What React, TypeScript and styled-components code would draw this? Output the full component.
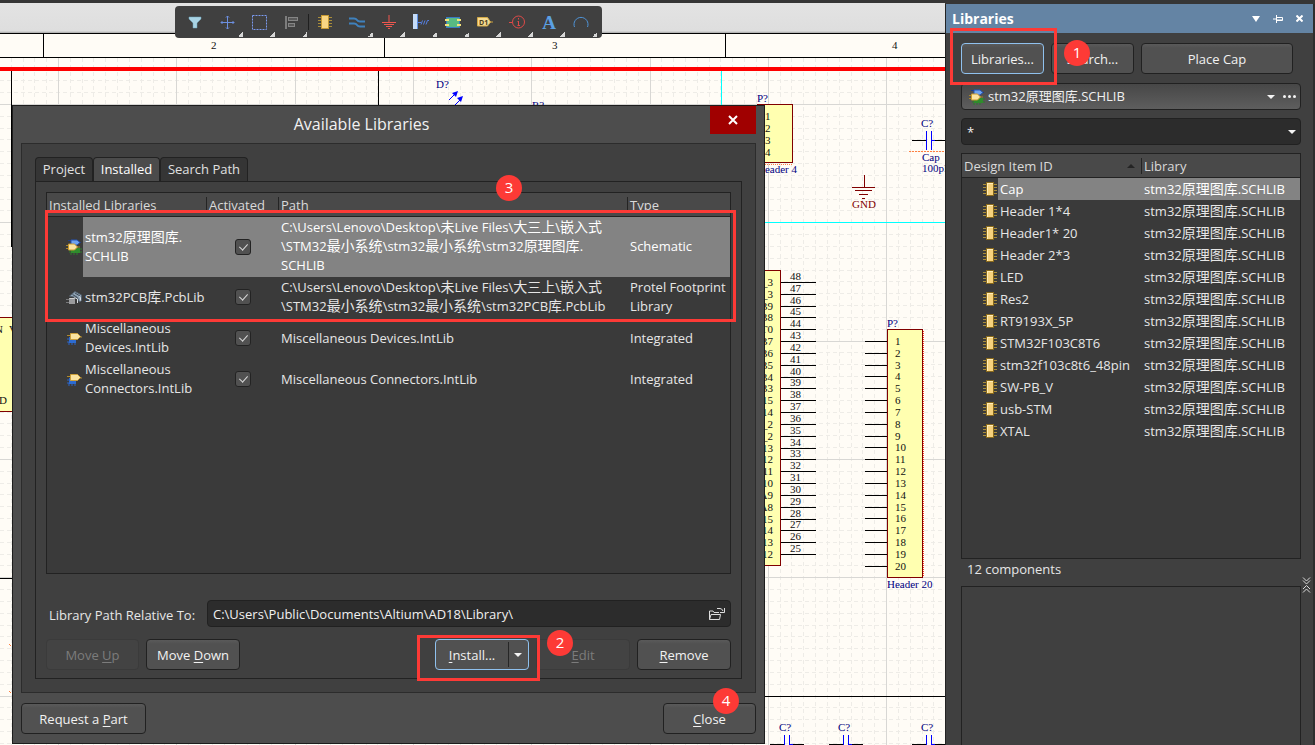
import React from "react";
import styled, { createGlobalStyle, css } from "styled-components";

const GlobalStyle = createGlobalStyle`
  * { box-sizing: border-box; }
  html, body { margin: 0; padding: 0; }
  body {
    background: #363636;
    color: #e6e6e6;
    font-family: "Open Sans", "Noto Sans", "Noto Sans CJK SC", sans-serif;
    font-size: 13px;
    line-height: 19px;
  }
  button, input, select { font: inherit; color: inherit; }
`;

const serif = `"Liberation Serif", serif`;

/* ---------- shared parts ---------- */

const Screen = styled.div`
  display: flex;
  flex-direction: column;
  height: 100vh;
  overflow: hidden;
  padding-top: 3px;
`;

const Workspace = styled.main`
  display: flex;
  flex: 1;
  min-height: 0;
`;

const Han = styled.span`
  font-size: 14px;
  line-height: 1;
`;

const HAN_RUN = /([\u4e00-\u9fff]+)/;

function Mixed({ text }: { text: string }) {
  return (
    <>
      {text.split(HAN_RUN).map((part, i) =>
        HAN_RUN.test(part) ? <Han key={i}>{part}</Han> : part
      )}
    </>
  );
}

function Lines({ lines }: { lines: string[] }) {
  return (
    <>
      {lines.map((line, i) => (
        <React.Fragment key={i}>
          {i > 0 && <br />}
          <Mixed text={line} />
        </React.Fragment>
      ))}
    </>
  );
}

const Button = styled.button<{ $width?: number; $focused?: boolean }>`
  height: 31px;
  width: ${(p) => (p.$width ? `${p.$width}px` : "auto")};
  padding: 2px 0 0;
  border: 1px solid ${(p) => (p.$focused ? "#8fc1ee" : "#212121")};
  border-radius: 4px;
  background: linear-gradient(#5a5a5a, #515151 4px, #515151);
  color: #f2f2f2;
  white-space: nowrap;
  &:disabled {
    border-color: #3b3b3b;
    background: #434343;
    color: #7c7c7c;
  }
  u { text-underline-offset: 2px; }
`;

const Anchor = styled.div`
  position: relative;
  display: flex;
`;

const Highlight = styled.span<{ $x: number; $y: number; $w: number; $h: number }>`
  position: absolute;
  left: ${(p) => p.$x}px;
  top: ${(p) => p.$y}px;
  width: ${(p) => p.$w}px;
  height: ${(p) => p.$h}px;
  border: 3px solid #fd3a36;
  pointer-events: none;
  z-index: 3;
`;

const Badge = styled.span<{ $x: number; $y: number }>`
  position: absolute;
  left: ${(p) => p.$x}px;
  top: ${(p) => p.$y}px;
  width: 26px;
  height: 26px;
  border-radius: 50%;
  background: #fd3a36;
  color: #fff;
  font-size: 15px;
  line-height: 24px;
  text-align: center;
  pointer-events: none;
  z-index: 4;
`;

const Table = styled.table`
  width: 100%;
  border-collapse: separate;
  border-spacing: 0;
  table-layout: fixed;
  text-align: left;
`;

const HeadCell = styled.th<{ $divided?: boolean }>`
  position: relative;
  height: 24px;
  padding: 2px 2px 0;
  border-bottom: 1px solid #222;
  background: ${(p) =>
    p.$divided
      ? "linear-gradient(#242424, #242424) right center / 1px 16px no-repeat, #494949"
      : "#494949"};
  color: #dadada;
  font-weight: 400;
  white-space: nowrap;
`;

const Row = styled.tr<{ $selected?: boolean }>`
  ${(p) =>
    p.$selected &&
    css`
      color: #fff;
      td:not(:first-child) { background: #838383; }
    `}
`;

/* ---------- icons ---------- */

const ChipIcon = () => (
  <svg width="14" height="14" viewBox="0 0 14 14">
    <path d="M0 2.5h14M0 5.5h14M0 8.5h14M0 11.5h14" stroke="#a98d3a" />
    <rect x="3.5" y="0.5" width="7" height="13" fill="#f7d27c" stroke="#8a6a1c" />
    <path d="M4.5 1v12M4 1.5h6" stroke="#ffedba" />
  </svg>
);

const SchLibIcon = () => (
  <svg width="16" height="16" viewBox="0 0 16 16">
    <path d="M2 1.5h4M12 3.5h3" stroke="#1f3d87" />
    <path d="M5 1h6l3 2.500-3 2.500H5z" fill="#6fa2ee" stroke="#2453b4" />
    <path d="M5 14v2M8 14v2M11 14v2M14 10h2M14 13h2M3 11h2M3 13h2" stroke="#2d7d2a" />
    <rect x="5" y="9" width="9" height="5" fill="#2f8c2d" />
    <path d="M0 6.500h3M0 9.500h3M11 8h3" stroke="#a8842a" />
    <path d="M2.500 5h6l3 3-3 3h-6z" fill="#fbe3a0" stroke="#c99a2e" />
  </svg>
);

const IntLibIcon = () => (
  <svg width="16" height="16" viewBox="0 0 16 16">
    <path d="M3 11v3M6 11v3M9 11v3M1 8h2M1 11h2" stroke="#2a62c4" />
    <rect x="3" y="6" width="7" height="6" fill="#2d6bd0" />
    <path d="M1 4.500h3M12 6h4" stroke="#b0892c" />
    <path d="M4.500 2.500h7l3 3-3 3h-7z" fill="#fbe3a0" stroke="#cda03a" />
  </svg>
);

const PcbLibIcon = () => (
  <svg width="16" height="16" viewBox="0 0 16 16">
    <path d="M0 9.500h4M0 12.500h3" stroke="#77787a" />
    <path d="M3.500 6L9 1.500 15.500 5v5.500l-2 1.500-2-4-4-1z" fill="#8fa3b5" stroke="#53606d" />
    <path d="M6.500 4.500l5 3M9 3l5 3" stroke="#3c4854" />
    <path d="M8.500 7.500l3 1.500v4M13 6.500l1.500 1v3" fill="none" stroke="#d5dbe0" />
    <rect x="3" y="8" width="6" height="6" fill="#9a9b9d" />
    <path d="M3.500 8.500h5" stroke="#d2d2d2" />
  </svg>
);

const CaretDown = () => (
  <svg width="8" height="4" viewBox="0 0 8 4">
    <path d="M0 0h8L4 4z" fill="#f4f4f4" />
  </svg>
);

const OpenFolderIcon = () => (
  <svg width="18" height="14" viewBox="0 0 18 14" fill="none" stroke="#dedede">
    <path d="M1.500 12.500v-8.500h3.500l1 1.500h5M11.500 12.500H1.500l1.500-5h9.500l-1 5z" />
    <path d="M9 1.500h3q2 0 3 2.500M16.500 1v4.500h-4.500" />
  </svg>
);

/* ---------- schematic sheet ---------- */

const Editor = styled.section`
  position: relative;
  flex: 1;
  min-width: 0;
  display: flex;
  flex-direction: column;
  overflow: hidden;
`;

const RulerStrip = styled.div`
  height: 30px;
  flex: none;
  background: linear-gradient(#e3e3e3, #dedede 28px, #a6a6a6);
`;

const Sheet = styled.svg`
  display: block;
  flex: 1;
  width: 100%;
  min-height: 0;
  background: #fffcf6;
  font-family: ${serif};
  font-size: 11px;
  fill: #101010;
  shape-rendering: crispEdges;
`;

const GRID = 11.83;
const at = (origin: number, step: number) => Math.round(origin + step * GRID) + 0.5;

const RIGHT_PINS = [
  "VDD_3", "VSS_3", "PB9", "PB8", "BOOT0", "PB7", "PB6", "PB5", "PB4", "PB3",
  "PA15", "PA14", "VDD_2", "VSS_2", "PA13", "PA12", "PA11", "PA10", "PA9",
  "PA8", "PB15", "PB14", "PB13", "PB12",
];

const range = (n: number, from = 0) => Array.from({ length: n }, (_, i) => i + from);

function GridLines() {
  return (
    <g>
      <g stroke="#eeece7" strokeDasharray="4 3">
        {range(200, -4).map((i) => (
          <path key={`v${i}`} d={`M${at(58, i)} 58V1600`} />
        ))}
        {range(130, -2).map((i) => (
          <path key={`h${i}`} d={`M0 ${at(104, i)}H2400`} />
        ))}
      </g>
      <g stroke="#d8d7d4">
        {range(20).map((i) => (
          <path key={`v${i}`} d={`M${at(58, i * 10)} 58V1600`} />
        ))}
        {range(13).map((i) => (
          <path key={`h${i}`} d={`M0 ${at(104, i * 10)}H2400`} />
        ))}
      </g>
    </g>
  );
}

function Capacitor({ x, y }: { x: number; y: number }) {
  return (
    <g>
      <text x={x - 5} y={y - 13} fill="#000080">C?</text>
      <path d={`M${x - 14} ${y}.5h14M${x + 9} ${y}.5h11`} stroke="#000" />
      <path d={`M${x}.5 ${y - 9}v19M${x + 5}.5 ${y - 9}v19M${x + 5} ${y}.5h4`} stroke="#0000ff" />
    </g>
  );
}

function Schematic() {
  return (
    <Sheet>
      <g transform="translate(0 -33)">
        <GridLines />
        <path
          d="M0 33.500H2400M0 57.500H2400M43.500 33V57M384.500 33V57M725.500 33V57"
          stroke="#000"
        />
        <text x="211" y="49">2</text>
        <text x="552" y="49">3</text>
        <text x="892" y="49">4</text>
        <path d="M11.500 69V247M378.500 69V110M0 578.500H12M760 696.500H2400" stroke="#000" />
        <rect x="0" y="67" width="2400" height="4" fill="#ff0000" />
        <path d="M721.500 71V110M760 222.500H2400" stroke="#00ffff" />

        <rect x="-60" y="317.500" width="100" height="94" fill="#ffffb0" stroke="#800000" />
        <text x="-5" y="333">N</text>
        <text x="9" y="333">V</text>
        <text x="-1" y="404">D</text>
        <path d="M9 644l2 2M9 691l2 2" stroke="#ff8040" />

        <text x="436" y="88" fill="#000080">D?</text>
        <g shapeRendering="auto">
          <path d="M449 100l6-6M455 105l6-6" stroke="#0000ff" />
          <path d="M458 91l-6 2 4 4zM463 96l-6 2 4 4z" fill="#0000ff" />
        </g>
        <text x="532" y="109" fill="#000080">R?</text>

        <text x="757" y="102" fill="#000080">P?</text>
        <rect x="757.500" y="104.500" width="35" height="58" fill="#ffffb0" stroke="#800000" />
        {range(4).map((i) => (
          <text key={i} x="765" y={120 + i * 12}>{i + 1}</text>
        ))}
        <path d="M757 164.500H793" stroke="#ff8040" strokeDasharray="1 1" />
        <text x="757" y="173" fill="#000080">Header 4</text>

        <Capacitor x={926} y={140} />
        <path d="M909 151.500H960" stroke="#ff8040" strokeDasharray="2 1" />
        <text x="922" y="161" fill="#000080">Cap</text>
        <text x="922" y="172" fill="#000080">100pF</text>

        <path
          d="M864.500 175V187M852 187.500H875M855 190.500H872M859 194.500H868M862 198.500H865"
          stroke="#800000"
        />
        <text x="852" y="208" fill="#800000">GND</text>

        <rect x="700" y="270.500" width="80.500" height="295" fill="#ffffb0" stroke="#800000" />
        {RIGHT_PINS.map((name, i) => {
          const y = at(282, i);
          return (
            <g key={i}>
              <path d={`M781 ${y}H816`} stroke="#000" />
              <text x="790" y={y - 2.5}>{48 - i}</text>
              <text x="773" y={y + 3.5} textAnchor="end">{name}</text>
            </g>
          );
        })}

        <text x="887" y="327" fill="#000080">P?</text>
        <rect x="887.500" y="329.500" width="35" height="248" fill="#ffffb0" stroke="#800000" />
        <path d="M923.500 331V577" stroke="#ff4020" strokeDasharray="1 1" />
        {range(20).map((i) => {
          const y = at(341, i);
          return (
            <g key={i}>
              <path d={`M865 ${y}H887`} stroke="#000" />
              <text x="895" y={y + 3.5}>{i + 1}</text>
            </g>
          );
        })}
        <text x="887" y="588" fill="#000080">Header 20</text>

        <Capacitor x={784} y={744} />
        <Capacitor x={843} y={744} />
        <Capacitor x={926} y={744} />
      </g>
    </Sheet>
  );
}

/* ---------- floating tool palette ---------- */

const Palette = styled.div`
  position: absolute;
  left: 175px;
  top: 3px;
  display: flex;
  padding: 0 5px 0 4px;
  height: 32px;
  border-radius: 4px;
  background: #404040;
`;

const Tool = styled.button<{ $menu?: boolean }>`
  display: flex;
  align-items: center;
  justify-content: center;
  width: 32px;
  padding: 0;
  border: 0;
  background: ${(p) =>
    p.$menu
      ? "linear-gradient(135deg, transparent 50%, #d6d6d6 50%) right bottom 1px / 5px 5px no-repeat"
      : "none"};
  svg { overflow: visible; }
`;

const ToolDivider = styled.span`
  width: 2px;
  height: 16px;
  margin: 8px 0;
  border-right: 1px solid #1f1f1f;
`;

const TOOLS: { name: string; menu?: boolean; divider?: boolean; art: React.ReactNode }[] = [
  {
    name: "Filter",
    art: <path d="M2 3h12v2l-4 4v5H6V9L2 5z" fill="#a9d3e4" stroke="#6ea5bd" strokeWidth=".5" />,
  },
  {
    name: "Move",
    menu: true,
    art: (
      <path
        d="M8.500 2v13M2 8.500h13M7 3.500L8.500 2 10 3.500M7 13.500L8.500 15l1.500-1.500M3.500 7L2 8.500 3.500 10M13.500 7L15 8.500 13.500 10"
        fill="none"
        stroke="#6c8fe0"
      />
    ),
  },
  {
    name: "Select",
    menu: true,
    art: <rect x="1.500" y="1.500" width="14" height="14" fill="none" stroke="#7b9af0" strokeDasharray="2 1" />,
  },
  {
    name: "Align",
    menu: true,
    divider: true,
    art: (
      <>
        <path d="M3 2v13" stroke="#7d7d7d" strokeWidth="2" />
        <rect x="5.500" y="3.500" width="9" height="3" fill="#5a5a5a" stroke="#858585" />
        <rect x="5.500" y="9.500" width="6" height="3" fill="#5a5a5a" stroke="#858585" />
      </>
    ),
  },
  {
    name: "Place part",
    art: (
      <>
        <path d="M1 3.500h14M1 6.500h14M1 9.500h14M1 12.500h14" stroke="#a98d3a" />
        <rect x="4.500" y="1.500" width="7" height="13" fill="#f9d583" stroke="#c79a34" />
      </>
    ),
  },
  {
    name: "Place wire",
    menu: true,
    art: (
      <path
        d="M0 4.500h5q2 0 3 1.500t3 1.500h5M0 9.500h5q2 0 3 1.500t3 1.500h5"
        fill="none"
        stroke="#3f81bd"
        strokeWidth="2"
      />
    ),
  },
  {
    name: "Place ground",
    menu: true,
    art: <path d="M8 1v7M1 8.500h14M3 10.500h10M5 12.500h6M7 14.500h2" stroke="#f0574f" />,
  },
  {
    name: "Place harness",
    menu: true,
    art: (
      <>
        <rect x="0" y="0" width="4" height="15" fill="#c5dcf8" />
        <path d="M4.500 0v15" stroke="#5d8fe0" />
        <path d="M5 8.500h3M8 10.500l1.500-4M10.500 10.500l1.500-4M13 10.500l1.500-4M14.500 6.500h1.500" stroke="#5580e6" />
      </>
    ),
  },
  {
    name: "Place sheet",
    menu: true,
    art: (
      <>
        <rect x="1.500" y="3.500" width="13" height="10" fill="#58b982" stroke="#3b78c4" />
        <path d="M0 5h4v2H0zM0 10h4v2H0zM12 5h4v2h-4zM12 10h4v2h-4z" fill="#f3e27a" />
      </>
    ),
  },
  {
    name: "Place port",
    menu: true,
    art: (
      <>
        <path d="M13 8h3" stroke="#c9a040" />
        <path d="M0.500 3.500h10l3 4.500-3 4h-10z" fill="#f7dc94" stroke="#d3aa48" />
        <text x="2" y="11" fontSize="7" fontWeight="700" fill="#4b3d18">D1</text>
      </>
    ),
  },
  {
    name: "Place directive",
    menu: true,
    art: (
      <>
        <circle cx="9.500" cy="8" r="6" fill="none" stroke="#df4a48" />
        <path d="M0 8.500h3M9.500 7v4.500M9.500 4v1.500M8.500 7.500h1M8.500 11.500h2.500" stroke="#df4a48" />
      </>
    ),
  },
  {
    name: "Place text",
    menu: true,
    art: (
      <text x="8" y="15" textAnchor="middle" fontSize="19" fontWeight="700" fontFamily="Liberation Serif, serif" fill="#5ba0e4">
        A
      </text>
    ),
  },
  {
    name: "Place arc",
    menu: true,
    art: <path d="M1.500 13a7 7 0 1 1 13 0" fill="none" stroke="#4f94d8" />,
  },
];

function ToolPalette() {
  return (
    <Palette>
      {TOOLS.map((t) => (
        <React.Fragment key={t.name}>
          <Tool type="button" aria-label={t.name} $menu={t.menu}>
            <svg width="16" height="16" viewBox="0 0 16 16">{t.art}</svg>
          </Tool>
          {t.divider && <ToolDivider />}
        </React.Fragment>
      ))}
    </Palette>
  );
}

/* ---------- Available Libraries dialog ---------- */

const Dialog = styled.div`
  position: absolute;
  left: 12px;
  top: 102px;
  bottom: 1px;
  width: 753px;
  display: flex;
  flex-direction: column;
  border: 1px solid #1d1d1d;
  background: #4d4d4d;
`;

const TitleBar = styled.header`
  display: flex;
  align-items: flex-start;
  height: 37px;
  flex: none;
  padding-right: 8px;
  h1 {
    flex: 1;
    margin: 0;
    color: #f2f2f2;
    font-size: 16px;
    font-weight: 400;
    line-height: 37px;
    text-align: center;
  }
`;

const CloseBox = styled.button`
  display: flex;
  align-items: center;
  justify-content: center;
  width: 46px;
  height: 28px;
  padding: 0;
  border: 0;
  background: #a00000;
`;

const Well = styled.div`
  flex: 1;
  min-height: 0;
  display: flex;
  flex-direction: column;
  margin: 0 8px;
  padding: 13px;
  border: 1px solid #2c2c2c;
  background: #404040;
`;

const Tabs = styled.div`
  display: flex;
  height: 24px;
  flex: none;
`;

const Tab = styled.button<{ $width: number }>`
  width: ${(p) => p.$width}px;
  padding: 0;
  border: 1px solid #222;
  border-bottom: 0;
  border-radius: 4px 4px 0 0;
  background: #353535;
  color: #e0e0e0;
  white-space: nowrap;
  &[aria-selected="true"] {
    background: #4b4b4b;
    color: #fff;
  }
`;

const TabPage = styled.div`
  flex: 1;
  min-height: 0;
  display: flex;
  flex-direction: column;
  padding: 10px 10px 8px;
  border: 1px solid #222;
`;

const TableFrame = styled.div`
  position: relative;
  flex: 1;
  min-height: 0;
  border: 1px solid #222;
  background: #3a3a3a;
`;

const LibCell = styled.td<{ $center?: boolean }>`
  padding: 1px 2px 2px;
  vertical-align: middle;
  text-align: ${(p) => (p.$center ? "center" : "left")};
  white-space: nowrap;
  line-height: 19px;
`;

const IconCell = styled.td`
  padding: 0 1px 0 0;
  text-align: right;
  vertical-align: middle;
  svg { display: block; margin-left: auto; }
`;

const CheckBox = styled.input`
  appearance: none;
  display: block;
  width: 16px;
  height: 16px;
  margin: 0 auto;
  border: 1px solid #232323;
  border-radius: 3px;
  background: #515151;
  position: relative;
  &:checked::after {
    content: "";
    position: absolute;
    left: 5px;
    top: 2px;
    width: 4px;
    height: 7px;
    border: solid #d8d8d8;
    border-width: 0 1px 1px 0;
    transform: rotate(42deg);
  }
`;

const PathRow = styled.div`
  display: flex;
  align-items: center;
  margin-top: 26px;
  label {
    width: 161px;
    padding: 3px 0 0 3px;
    white-space: nowrap;
  }
`;

const Field = styled.div<{ $light?: boolean }>`
  flex: 1;
  display: flex;
  align-items: center;
  gap: 3px;
  height: 27px;
  padding: 0 4px 0 5px;
  border: 1px solid #212121;
  border-radius: 4px;
  background: ${(p) => (p.$light ? "linear-gradient(#474747, #5e5e5e)" : "#2c2c2c")};
  color: #f0f0f0;
  input, select {
    flex: 1;
    min-width: 0;
    height: 25px;
    padding: 0;
    border: 0;
    outline: 0;
    appearance: none;
    background: transparent;
  }
`;

const FieldLead = styled.span`
  display: flex;
  padding-left: 2px;
`;

const FieldTail = styled.span`
  display: flex;
  align-items: center;
  gap: 8px;
`;

const GlyphButton = styled.button`
  display: flex;
  align-items: center;
  justify-content: center;
  padding: 0;
  border: 0;
  background: none;
`;

const ButtonRow = styled.div`
  display: flex;
  gap: 7px;
  margin-top: 12px;
`;

const Spacer = styled.span`
  flex: 1;
`;

const SplitButton = styled.div`
  display: flex;
  align-items: center;
  width: 94px;
  height: 31px;
  border: 1px solid #8fc1ee;
  border-radius: 4px;
  background: #515151;
  button {
    height: 29px;
    padding: 2px 0 0;
    border: 0;
    background: none;
    color: #f2f2f2;
  }
  u { text-underline-offset: 2px; }
  button:first-child { width: 72px; }
  button:last-child {
    flex: 1;
    height: 25px;
    padding: 0 1px 0 0;
    border-left: 1px solid #262626;
    display: flex;
    align-items: center;
    justify-content: center;
  }
`;

const Footer = styled.footer`
  display: flex;
  justify-content: space-between;
  padding: 10px 8px 9px;
`;

const LIBRARIES = [
  {
    icon: <SchLibIcon />,
    name: ["stm32原理图库.", "SCHLIB"],
    path: [
      "C:\\Users\\Lenovo\\Desktop\\未Live Files\\大三上\\嵌入式",
      "\\STM32最小系统\\stm32最小系统\\stm32原理图库.",
      "SCHLIB",
    ],
    type: ["Schematic"],
    selected: true,
  },
  {
    icon: <PcbLibIcon />,
    name: ["stm32PCB库.PcbLib"],
    path: [
      "C:\\Users\\Lenovo\\Desktop\\未Live Files\\大三上\\嵌入式",
      "\\STM32最小系统\\stm32最小系统\\stm32PCB库.PcbLib",
    ],
    type: ["Protel Footprint", "Library"],
  },
  {
    icon: <IntLibIcon />,
    name: ["Miscellaneous", "Devices.IntLib"],
    path: ["Miscellaneous Devices.IntLib"],
    type: ["Integrated"],
  },
  {
    icon: <IntLibIcon />,
    name: ["Miscellaneous", "Connectors.IntLib"],
    path: ["Miscellaneous Connectors.IntLib"],
    type: ["Integrated"],
  },
];

function LibrariesDialog() {
  return (
    <Dialog role="dialog" aria-labelledby="dialog-title">
      <TitleBar>
        <h1 id="dialog-title">Available Libraries</h1>
        <CloseBox type="button" aria-label="Close dialog">
          <svg width="10" height="10" viewBox="0 0 10 10">
            <path d="M1 1l8 8M9 1L1 9" stroke="#fff" strokeWidth="2" />
          </svg>
        </CloseBox>
      </TitleBar>
      <Well>
        <Tabs role="tablist">
          <Tab type="button" role="tab" aria-selected="false" $width={58}>Project</Tab>
          <Tab type="button" role="tab" aria-selected="true" $width={67}>Installed</Tab>
          <Tab type="button" role="tab" aria-selected="false" $width={88}>Search Path</Tab>
        </Tabs>
        <TabPage role="tabpanel">
          <TableFrame>
            <Table>
              <colgroup>
                <col style={{ width: 36 }} />
                <col style={{ width: 124 }} />
                <col style={{ width: 72 }} />
                <col style={{ width: 349 }} />
                <col />
              </colgroup>
              <thead>
                <tr>
                  <HeadCell colSpan={2} $divided>Installed Libraries</HeadCell>
                  <HeadCell $divided>Activated</HeadCell>
                  <HeadCell $divided>Path</HeadCell>
                  <HeadCell>Type</HeadCell>
                </tr>
              </thead>
              <tbody>
                {LIBRARIES.map((lib) => (
                  <Row key={lib.name.join("")} $selected={lib.selected}>
                    <IconCell>{lib.icon}</IconCell>
                    <LibCell><Lines lines={lib.name} /></LibCell>
                    <LibCell $center>
                      <CheckBox type="checkbox" defaultChecked aria-label={`Activate ${lib.name.join(" ")}`} />
                    </LibCell>
                    <LibCell><Lines lines={lib.path} /></LibCell>
                    <LibCell><Lines lines={lib.type} /></LibCell>
                  </Row>
                ))}
              </tbody>
            </Table>
            <Highlight $x={-2} $y={17} $w={691} $h={112} />
            <Badge $x={449} $y={-18}>3</Badge>
          </TableFrame>
          <PathRow>
            <label htmlFor="library-path">Library Path Relative To:</label>
            <Field>
              <input id="library-path" defaultValue={"C:\\Users\\Public\\Documents\\Altium\\AD18\\Library\\"} />
              <GlyphButton type="button" aria-label="Browse"><OpenFolderIcon /></GlyphButton>
            </Field>
          </PathRow>
          <ButtonRow>
            <Button type="button" disabled $width={93}>Move <u>U</u>p</Button>
            <Button type="button" $width={94}>Move <u>D</u>own</Button>
            <Spacer />
            <Anchor>
              <SplitButton>
                <button type="button"><u>I</u>nstall...</button>
                <button type="button" aria-label="More install options"><CaretDown /></button>
              </SplitButton>
              <Highlight $x={-18} $y={-4} $w={123} $h={46} />
              <Badge $x={112} $y={-9}>2</Badge>
            </Anchor>
            <Button type="button" disabled $width={94}><u>E</u>dit</Button>
            <Button type="button" $width={94}><u>R</u>emove</Button>
          </ButtonRow>
        </TabPage>
      </Well>
      <Footer>
        <Button type="button" $width={125}>Request a <u>P</u>art</Button>
        <Anchor>
          <Button type="button" $width={93}><u>C</u>lose</Button>
          <Badge $x={50} $y={-15}>4</Badge>
        </Anchor>
      </Footer>
    </Dialog>
  );
}

/* ---------- Libraries side panel ---------- */

const Panel = styled.aside`
  display: flex;
  flex-direction: column;
  width: 370px;
  flex: none;
  margin-top: 1px;
  border-left: 1px solid #232323;
  border-right: 2px solid #2e2e2e;
  background: #404040;
`;

const PanelTitle = styled.header`
  display: flex;
  align-items: center;
  gap: 13px;
  height: 29px;
  flex: none;
  padding: 0 10px 0 6px;
  background: #6484a4;
  color: #fff;
  h2 {
    flex: 1;
    margin: 0;
    font-size: 14px;
    font-weight: 700;
  }
`;

const PanelBody = styled.div`
  flex: 1;
  min-height: 0;
  display: flex;
  flex-direction: column;
  padding: 10px 12px 0 15px;
`;

const PanelButtons = styled.div`
  display: flex;
  gap: 7px;
  margin-bottom: 9px;
  padding-right: 8px;
  > button:last-child { flex: 1; }
`;

const Filter = styled.div`
  display: flex;
  margin: 8px 0;
`;

const Combo = styled.div`
  display: flex;
`;

const ComponentsFrame = styled(TableFrame)`
  flex: none;
  height: 406px;
`;

const PartCell = styled.td`
  height: 22px;
  padding: 0 2px;
  white-space: nowrap;
`;

const SortMark = styled.svg`
  position: absolute;
  right: 7px;
  top: 10px;
`;

const Count = styled.p`
  margin: 0;
  padding: 1px 6px 0;
  height: 27px;
`;

const Preview = styled.div`
  flex: 1;
  border: 1px solid #222;
  border-bottom: 0;
  position: relative;
`;

const Splitter = styled.svg`
  position: absolute;
  right: -11px;
  top: -10px;
`;

const LIBRARY = "stm32原理图库.SCHLIB";

const PARTS = [
  "Cap", "Header 1*4", "Header1* 20", "Header 2*3", "LED", "Res2", "RT9193X_5P",
  "STM32F103C8T6", "stm32f103c8t6_48pin", "SW-PB_V", "usb-STM", "XTAL",
];

function LibrariesPanel() {
  return (
    <Panel>
      <PanelTitle>
        <h2>Libraries</h2>
        <GlyphButton type="button" aria-label="Panel menu">
          <svg width="8" height="6" viewBox="0 0 8 6"><path d="M0 0h8L4 6z" fill="#fff" /></svg>
        </GlyphButton>
        <GlyphButton type="button" aria-label="Pin panel">
          <svg width="10" height="8" viewBox="0 0 10 8" fill="none" stroke="#fff">
            <path d="M0 4h3M3.500 0v8M4 2.500h5.500v3H4M4 5h5" />
          </svg>
        </GlyphButton>
        <GlyphButton type="button" aria-label="Close panel">
          <svg width="7" height="7" viewBox="0 0 7 7">
            <path d="M0.500 0.500l6 6M6.500 0.500l-6 6" stroke="#fff" strokeWidth="2" />
          </svg>
        </GlyphButton>
      </PanelTitle>
      <PanelBody>
        <PanelButtons>
          <Anchor>
            <Button type="button" $width={83} $focused>Libraries...</Button>
            <Highlight $x={-11} $y={-15} $w={107} $h={57} />
            <Badge $x={103} $y={-3}>1</Badge>
          </Anchor>
          <Button type="button" $width={83}>Search...</Button>
          <Button type="button">Place Cap</Button>
        </PanelButtons>
        <Combo>
          <Field $light>
            <FieldLead><SchLibIcon /></FieldLead>
            <select aria-label="Library" defaultValue={LIBRARY}>
              <option>{LIBRARY}</option>
            </select>
            <FieldTail>
              <CaretDown />
              <GlyphButton type="button" aria-label="More">
                <svg width="13" height="3" viewBox="0 0 13 3" fill="#f4f4f4">
                  <circle cx="1.500" cy="1.500" r="1.500" />
                  <circle cx="6.500" cy="1.500" r="1.500" />
                  <circle cx="11.500" cy="1.500" r="1.500" />
                </svg>
              </GlyphButton>
            </FieldTail>
          </Field>
        </Combo>
        <Filter>
          <Field>
            <input aria-label="Filter" defaultValue="*" />
            <GlyphButton type="button" aria-label="Filter history"><CaretDown /></GlyphButton>
          </Field>
        </Filter>
        <ComponentsFrame>
          <Table>
            <colgroup>
              <col style={{ width: 36 }} />
              <col style={{ width: 144 }} />
              <col />
            </colgroup>
            <thead>
              <tr>
                <HeadCell colSpan={2} $divided>
                  Design Item ID
                  <SortMark width="8" height="4" viewBox="0 0 8 4"><path d="M0 4h8L4 0z" fill="#242424" /></SortMark>
                </HeadCell>
                <HeadCell>Library</HeadCell>
              </tr>
            </thead>
            <tbody>
              {PARTS.map((part, i) => (
                <Row key={part} $selected={i === 0}>
                  <IconCell><ChipIcon /></IconCell>
                  <PartCell>{part}</PartCell>
                  <PartCell><Mixed text={LIBRARY} /></PartCell>
                </Row>
              ))}
            </tbody>
          </Table>
        </ComponentsFrame>
        <Count>12 components</Count>
        <Preview>
          <Splitter width="9" height="16" viewBox="0 0 9 16" fill="none" stroke="#d8d8d8">
            <path d="M1 0.500l3.500 3.500L8 0.500M1 3.500L4.500 7 8 3.500M1 12l3.500-3.500L8 12M1 15.500L4.500 12 8 15.500" />
          </Splitter>
        </Preview>
      </PanelBody>
    </Panel>
  );
}

export default function App() {
  return (
    <>
      <GlobalStyle />
      <Screen>
        <Workspace>
          <Editor>
            <RulerStrip />
            <Schematic />
            <ToolPalette />
            <LibrariesDialog />
          </Editor>
          <LibrariesPanel />
        </Workspace>
      </Screen>
    </>
  );
}
